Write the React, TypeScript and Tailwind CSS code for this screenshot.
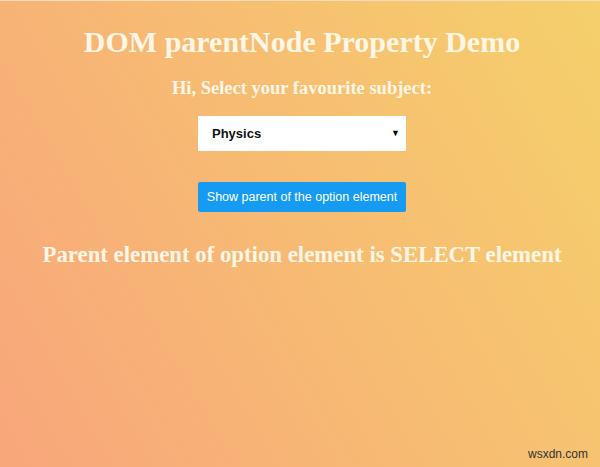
export default function App() {
  return (
    <div className="relative h-[467px] w-[600px] overflow-hidden bg-[linear-gradient(60deg,#f8a67b_0%,#f7bb73_50%,#f5d06b_100%)] [font-family:'Liberation_Serif',serif]">
      <div className="h-px w-full bg-[#f3dcc0]" />
      <div className="flex flex-col items-center pl-[4px]">
        <h1 className="mt-[23px] text-[30px] font-bold leading-[36px] text-[#fff6e6]">
          DOM parentNode Property Demo
        </h1>
        <h3 className="mt-[17px] text-[18.5px] font-bold leading-[22px] text-[#fff6e6]">
          Hi, Select your favourite subject:
        </h3>
        <div className="mt-[17px] flex h-[35px] w-[208px] items-center justify-between bg-white pl-[14px] pr-[6px] [font-family:'Liberation_Sans',Arial,sans-serif]">
          <span className="text-[13px] font-bold text-[#111]">Physics</span>
          <span className="text-[9px] text-black">▼</span>
        </div>
        <button className="mt-[31px] flex h-[30px] w-[208px] items-center justify-center rounded-[2px] bg-[#159cf2] text-[12.5px] text-white [font-family:'Liberation_Sans',Arial,sans-serif]">
          Show parent of the option element
        </button>
        <h2 className="mt-[30px] text-[22.8px] font-bold leading-[26px] text-[#fff6e6]">
          Parent element of option element is SELECT element
        </h2>
      </div>
      <div className="absolute bottom-[4px] right-[12px] text-[12px] text-[#333] [font-family:'Liberation_Sans',Arial,sans-serif]">
        wsxdn.com
      </div>
    </div>
  );
}
